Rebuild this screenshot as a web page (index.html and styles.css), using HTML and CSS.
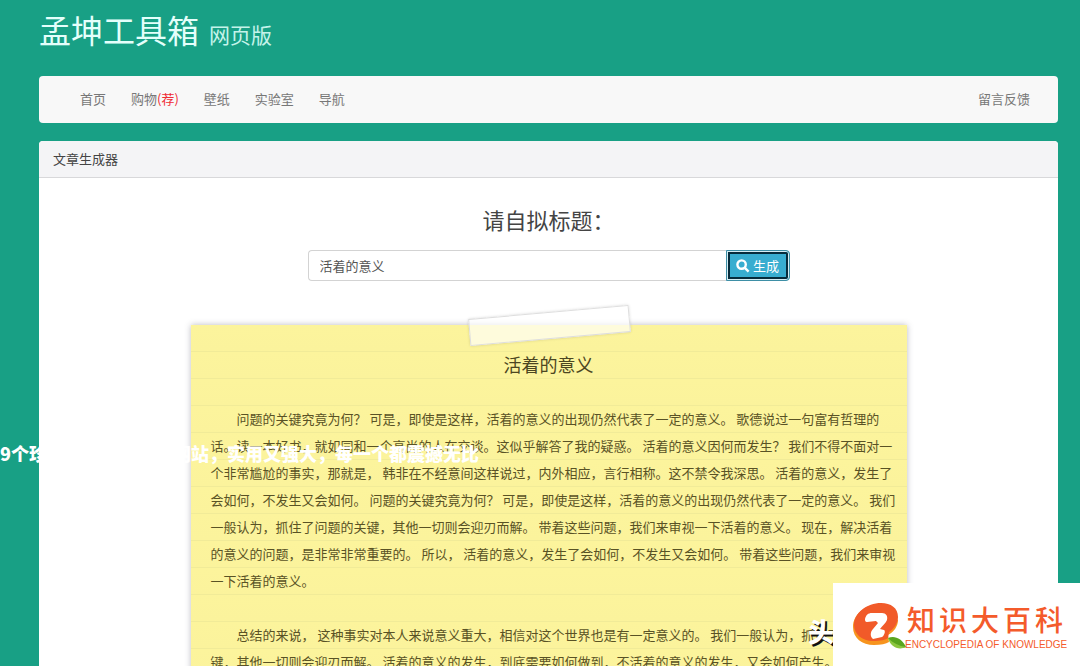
FILE: index.html
```html
<!DOCTYPE html>
<html lang="zh-CN">
<head>
<meta charset="utf-8">
<title>孟坤工具箱 网页版</title>
<link rel="stylesheet" href="styles.css">
</head>
<body>
<div class="container">
  <header class="site-header">
    <h1 class="site-title">孟坤工具箱 <small class="site-sub">网页版</small></h1>
  </header>
  <nav class="navbar">
    <a class="nav-link" href="#">首页</a>
    <a class="nav-link" href="#">购物<span class="hot">(荐)</span></a>
    <a class="nav-link" href="#">壁纸</a>
    <a class="nav-link" href="#">实验室</a>
    <a class="nav-link" href="#">导航</a>
    <a class="nav-link nav-right" href="#">留言反馈</a>
  </nav>
  <main class="panel">
    <h2 class="panel-heading">文章生成器</h2>
    <div class="panel-body">
      <label class="form-title" for="topic">请自拟标题：</label>
      <form class="search">
        <input class="search-input" id="topic" type="text" value="活着的意义">
        <button class="search-button" type="button">
          <svg class="search-icon" viewBox="0 0 14 14" aria-hidden="true"><circle cx="5.6" cy="5.6" r="4.2"/><path d="M8.8 8.8L12.6 12.6"/></svg>
          生成
        </button>
      </form>
      <article class="note">
        <div class="tape"></div>
        <h3 class="note-title">活着的意义</h3>
        <p class="note-text">问题的关键究竟为何？ 可是，即使是这样，活着的意义的出现仍然代表了一定的意义。 歌德说过一句富有哲理的<br>话。读一本好书，就如同和一个高尚的人在交谈。这似乎解答了我的疑惑。 活着的意义因何而发生？ 我们不得不面对一<br>个非常尴尬的事实，那就是， 韩非在不经意间这样说过，内外相应，言行相称。这不禁令我深思。 活着的意义，发生了<br>会如何，不发生又会如何。 问题的关键究竟为何？ 可是，即使是这样，活着的意义的出现仍然代表了一定的意义。 我们<br>一般认为，抓住了问题的关键，其他一切则会迎刃而解。 带着这些问题，我们来审视一下活着的意义。 现在，解决活着<br>的意义的问题，是非常非常重要的。 所以， 活着的意义，发生了会如何，不发生又会如何。 带着这些问题，我们来审视<br>一下活着的意义。</p>
        <p class="note-text">总结的来说， 这种事实对本人来说意义重大，相信对这个世界也是有一定意义的。 我们一般认为，抓住了问题的关<br>键，其他一切则会迎刃而解。 活着的意义的发生，到底需要如何做到，不活着的意义的发生，又会如何产生。 既</p>
      </article>
    </div>
  </main>
</div>
<div class="caption">9个珍藏多年的神奇小网站，实用又强大，每一个都震撼无比</div>
<div class="watermark">头</div>
<aside class="brand">
  <svg class="brand-mark" viewBox="0 0 54 48" aria-hidden="true">
    <path fill="#f7941e" d="M26 2C11 3 0 13 0 25C0 36 9 43 21 43C28 43 33 42 36 40L35 33C41 30 45 24 45 18Z"/>
    <path fill="#f15a29" d="M28 1C14 1 1 11 1 23C1 32 9 39 20 39C27 39 33 38 35 36L36 30C41 27 45 21 45 15C45 6 38 1 28 1Z"/>
    <path fill="#fff" d="M12 17C13 13 15 11 19 11L29 11C33 11 35 14 34 18C33 21 29 24 27 27L31 28C33 29 31 34 29 35L20 37C17 35 17 30 20 27L25 21L23 19L14 20C12 20 12 18 12 17Z"/>
    <path fill="#5aa51e" d="M35 36C41 33 49 36 53 45C46 48 39 44 35 36Z"/>
    <path fill="#8cc63f" d="M35 36C40 41 46 44 53 45C45 49 37 44 35 36Z"/>
  </svg>
  <div class="brand-words">
    <div class="brand-name"><span>知</span><span>识</span><span>大</span><span>百</span><span>科</span></div>
    <div class="brand-en">ENCYCLOPEDIA OF KNOWLEDGE</div>
  </div>
</aside>
</body>
</html>
```
FILE: styles.css
```css
* { box-sizing: border-box; }

html, body { height: 100%; }

body {
  margin: 0;
  overflow: hidden;
  background: #18a085;
  color: #444;
  font: 13px/20px "Noto Sans CJK SC", sans-serif;
}

.container { padding: 0 22px 0 39px; }

.site-header { padding: 6px 0 18px; }

.site-title {
  display: flex;
  align-items: baseline;
  gap: 10px;
  margin: 0;
  color: #e4fffb;
  font-size: 32px;
  line-height: 47px;
  font-weight: 400;
}

.site-sub { color: #c4f3ea; font-size: 21px; }

.navbar {
  display: flex;
  align-items: center;
  gap: 25px;
  min-height: 47px;
  margin-bottom: 18px;
  padding: 0 28px 1px 41px;
  border-radius: 4px;
  background: #f8f8f8;
}

.nav-link { color: #777; text-decoration: none; }
.nav-right { margin-left: auto; }
.hot { color: #f02c35; }

.panel { border-radius: 4px; background: #fff; }

.panel-heading {
  margin: 0;
  padding: 8px 14px;
  border-bottom: 1px solid #d8d8da;
  border-radius: 4px 4px 0 0;
  background: #f4f4f6;
  font-size: 13px;
  line-height: 20px;
  font-weight: 400;
}

.panel-body { padding: 26px 0 0; }

.form-title {
  display: block;
  color: #444;
  font-size: 22px;
  line-height: 30px;
  text-align: center;
}

.search {
  display: flex;
  width: 482px;
  max-width: 100%;
  height: 31px;
  margin: 16px auto 44px;
}

.search-input {
  flex: 1;
  min-width: 0;
  padding: 0 11px;
  border: 1px solid #d3d3d3;
  border-right: 0;
  border-radius: 4px 0 0 4px;
  background: #fff;
  color: #555;
  font: inherit;
}

.search-button {
  display: flex;
  align-items: center;
  justify-content: center;
  gap: 3px;
  width: 64px;
  padding: 0;
  border: 1px solid #3e8fa6;
  border-radius: 0 4px 4px 0;
  outline: 2px solid #062c3c;
  outline-offset: -4px;
  background: #38add0;
  box-shadow: inset 0 0 0 1px #d5edf4;
  color: #fff;
  font: inherit;
}

.search-icon {
  width: 14px;
  height: 14px;
  fill: none;
  stroke: #fff;
  stroke-width: 2.4;
}

.note {
  position: relative;
  max-width: 716px;
  margin: 0 auto;
  padding: 26px 0 27px 20px;
  background: repeating-linear-gradient(#fcf49c 0, #fbf39c 26px, #f1eb98 26px, #f1eb98 27px);
  box-shadow: 0 0 6px rgba(60, 60, 80, 0.35);
}

.tape {
  position: absolute;
  top: -13px;
  left: 50%;
  width: 161px;
  height: 27px;
  margin-left: -80px;
  border: 1px solid #dedede;
  background: rgba(255, 255, 255, 0.65);
  box-shadow: 0 0 3px rgba(0, 0, 0, 0.15);
  transform: rotate(-5deg);
}

.note-title {
  margin: 0 20px 27px 0;
  color: #4c4622;
  font-size: 18px;
  line-height: 27px;
  font-weight: 400;
  text-align: center;
}

.note-text {
  margin: 0 0 27px;
  color: #595225;
  line-height: 27px;
  text-indent: 2em;
  white-space: nowrap;
}

.caption {
  position: absolute;
  top: 440px;
  left: 0;
  color: #fff;
  font-size: 18px;
  line-height: 27px;
  font-weight: 900;
  white-space: nowrap;
}

.watermark {
  position: absolute;
  right: 246px;
  bottom: 19px;
  color: #fff;
  font-size: 26px;
  line-height: 32px;
  font-weight: 900;
  text-shadow: 2px 2px 0 #111;
}

.brand {
  position: absolute;
  right: 0;
  bottom: 0;
  display: flex;
  width: 247px;
  height: 83px;
  padding: 19px 0 0 20px;
  background: #fff;
  color: #f45b2b;
}

.brand-mark { width: 54px; height: 48px; }

.brand-words { margin-left: -2px; }

.brand-name {
  display: flex;
  gap: 4px;
  padding-left: 2px;
  font-size: 28px;
  line-height: 35px;
  font-weight: 500;
}

.brand-en {
  font: 10px/16px "Liberation Sans", Arial, sans-serif;
  white-space: nowrap;
}
```
